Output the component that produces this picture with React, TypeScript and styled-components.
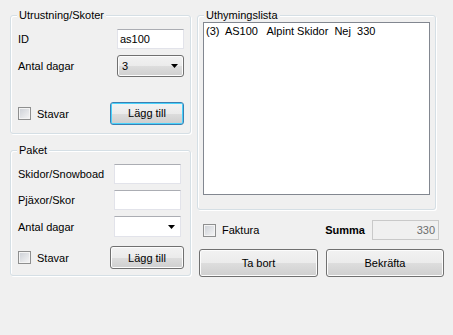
import styled, { createGlobalStyle } from 'styled-components';

const Global = createGlobalStyle`
  html, body {
    margin: 0;
    padding: 0;
    background: #f0f0f0;
  }
  body {
    font-family: "Liberation Sans", Arial, sans-serif;
    font-size: 11px;
    color: #000;
  }
`;

const Form = styled.div`
  width: 453px;
  height: 335px;
  box-sizing: border-box;
  padding: 15px 0 0 10px;
  display: flex;
  gap: 6px;
  background: #f0f0f0;
`;

const LeftColumn = styled.div`
  width: 181px;
  display: flex;
  flex-direction: column;
  gap: 16px;
`;

const RightColumn = styled.div`
  width: 247px;
  display: flex;
  flex-direction: column;
`;

const GroupBox = styled.div<{ $height: number; $width?: number }>`
  position: relative;
  box-sizing: border-box;
  height: ${p => p.$height}px;
  width: ${p => (p.$width ? `${p.$width}px` : 'auto')};
  border: 1px solid #d5dfe5;
  border-radius: 3px;
  box-shadow: inset 1px 1px 0 #fff, 1px 1px 0 #fff;
  display: flex;
  flex-direction: column;
`;

const GroupTitle = styled.span`
  position: absolute;
  top: -7px;
  left: 6px;
  padding: 0 2px;
  line-height: 13px;
  background: #f0f0f0;
`;

const FieldRow = styled.div<{ $top: number; $right: number; $h?: number }>`
  display: grid;
  grid-template-columns: 1fr 67px;
  align-items: center;
  margin-top: ${p => p.$top}px;
  padding: 0 ${p => p.$right}px 0 7px;
  height: ${p => p.$h ?? 20}px;
`;

const Label = styled.span<{ $bold?: boolean }>`
  font-weight: ${p => (p.$bold ? 700 : 400)};
  white-space: nowrap;
`;

const TextBox = styled.div<{ $disabled?: boolean }>`
  box-sizing: border-box;
  height: 20px;
  background: ${p => (p.$disabled ? '#f0f0f0' : '#fff')};
  border: 1px solid ${p => (p.$disabled ? '#c9c9c9' : '#e2e3ea')};
  border-top-color: ${p => (p.$disabled ? '#c9c9c9' : '#abadb3')};
  color: ${p => (p.$disabled ? '#6d6d6d' : '#000')};
  text-align: ${p => (p.$disabled ? 'right' : 'left')};
  padding: 0 3px 0 2px;
  line-height: 18px;
`;

const ComboButton = styled.div`
  box-sizing: border-box;
  height: 22px;
  border: 1px solid #707070;
  border-radius: 3px;
  background: linear-gradient(#f2f2f2 0%, #ebebeb 50%, #dddddd 51%, #cfcfcf 100%);
  box-shadow: inset 0 0 0 1px #fcfcfc;
  display: flex;
  align-items: center;
  justify-content: space-between;
  padding: 0 5px 0 4px;
`;

const ComboBox = styled(TextBox)`
  display: flex;
  align-items: center;
  justify-content: flex-end;
  height: 21px;
  padding: 0 5px;
`;

const Arrow = () => (
  <svg width="7" height="4" viewBox="0 0 7 4">
    <path d="M0 0h7L3.5 4z" fill="#000" />
  </svg>
);

const ActionRow = styled.div<{ $top: number }>`
  display: flex;
  align-items: center;
  justify-content: space-between;
  margin-top: ${p => p.$top}px;
  padding: 0 6px 0 7px;
`;

const CheckLabel = styled.label`
  display: flex;
  align-items: center;
  gap: 6px;
`;

const CheckBox = styled.span`
  box-sizing: border-box;
  width: 13px;
  height: 13px;
  border: 1px solid #8e8f8f;
  background: linear-gradient(135deg, #cbcfd5 0%, #f6f6f6 100%);
  box-shadow: inset 0 0 0 1px #f4f4f4;
`;

const Button = styled.button<{ $w: number; $h: number; $focused?: boolean }>`
  box-sizing: border-box;
  width: ${p => p.$w}px;
  height: ${p => p.$h}px;
  margin: 0;
  padding: 0;
  font: inherit;
  color: #000;
  border: 1px solid ${p => (p.$focused ? '#3c7fb1' : '#707070')};
  border-radius: 3px;
  background: ${p =>
    p.$focused
      ? 'linear-gradient(#eaf6fd 0%, #d9f0fc 50%, #bee6fd 51%, #a7d9f5 100%)'
      : 'linear-gradient(#f2f2f2 0%, #ebebeb 50%, #dddddd 51%, #cfcfcf 100%)'};
  box-shadow: inset 0 0 0 1px ${p => (p.$focused ? '#48d2fc' : '#fcfcfc')};
`;

const FocusFace = styled.span`
  display: block;
  margin: 1px;
  height: calc(100% - 2px);
  line-height: 19px;
  background: linear-gradient(#f2f2f2 0%, #ebebeb 50%, #dddddd 51%, #cfcfcf 100%);
  border-radius: 1px;
`;

const ListBox = styled.div`
  flex: 1;
  margin: 6px 5px 14px 5px;
  background: #fff;
  border: 1px solid #828790;
  padding: 2px 2px;
  white-space: pre;
  line-height: 13px;
`;

const SummaryRow = styled.div`
  display: flex;
  align-items: center;
  margin-top: 10px;
  height: 20px;
  padding: 0 5px 0 6px;
`;

const Spacer = styled.div`
  flex: 1;
`;

const SumBox = styled(TextBox)`
  width: 67px;
  margin-left: 7px;
`;

const ButtonRow = styled.div`
  display: flex;
  gap: 8px;
  margin-top: 9px;
  padding-left: 2px;
`;

export default function App() {
  return (
    <>
      <Global />
      <Form>
        <LeftColumn>
          <GroupBox $height={119}>
            <GroupTitle>Utrustning/Skoter</GroupTitle>
            <FieldRow $top={13} $right={6}>
              <Label>ID</Label>
              <TextBox>as100</TextBox>
            </FieldRow>
            <FieldRow $top={6} $right={6} $h={22}>
              <Label>Antal dagar</Label>
              <ComboButton>
                <span>3</span>
                <Arrow />
              </ComboButton>
            </FieldRow>
            <ActionRow $top={25}>
              <CheckLabel>
                <CheckBox />
                Stavar
              </CheckLabel>
              <Button $w={74} $h={23} $focused>
                <FocusFace>Lägg till</FocusFace>
              </Button>
            </ActionRow>
          </GroupBox>

          <GroupBox $height={126}>
            <GroupTitle>Paket</GroupTitle>
            <FieldRow $top={13} $right={9}>
              <Label>Skidor/Snowboad</Label>
              <TextBox />
            </FieldRow>
            <FieldRow $top={6} $right={9}>
              <Label>Pjäxor/Skor</Label>
              <TextBox />
            </FieldRow>
            <FieldRow $top={6} $right={9} $h={21}>
              <Label>Antal dagar</Label>
              <ComboBox>
                <Arrow />
              </ComboBox>
            </FieldRow>
            <ActionRow $top={9}>
              <CheckLabel>
                <CheckBox />
                Stavar
              </CheckLabel>
              <Button $w={74} $h={23}>Lägg till</Button>
            </ActionRow>
          </GroupBox>
        </LeftColumn>

        <RightColumn>
          <GroupBox $height={195} $width={239}>
            <GroupTitle>Uthymingslista</GroupTitle>
            <ListBox>{'(3)  AS100   Alpint Skidor  Nej  330'}</ListBox>
          </GroupBox>
          <SummaryRow>
            <CheckLabel>
              <CheckBox />
              Faktura
            </CheckLabel>
            <Spacer />
            <Label $bold>Summa</Label>
            <SumBox $disabled>330</SumBox>
          </SummaryRow>
          <ButtonRow>
            <Button $w={119} $h={28}>Ta bort</Button>
            <Button $w={118} $h={28}>Bekräfta</Button>
          </ButtonRow>
        </RightColumn>
      </Form>
    </>
  );
}
